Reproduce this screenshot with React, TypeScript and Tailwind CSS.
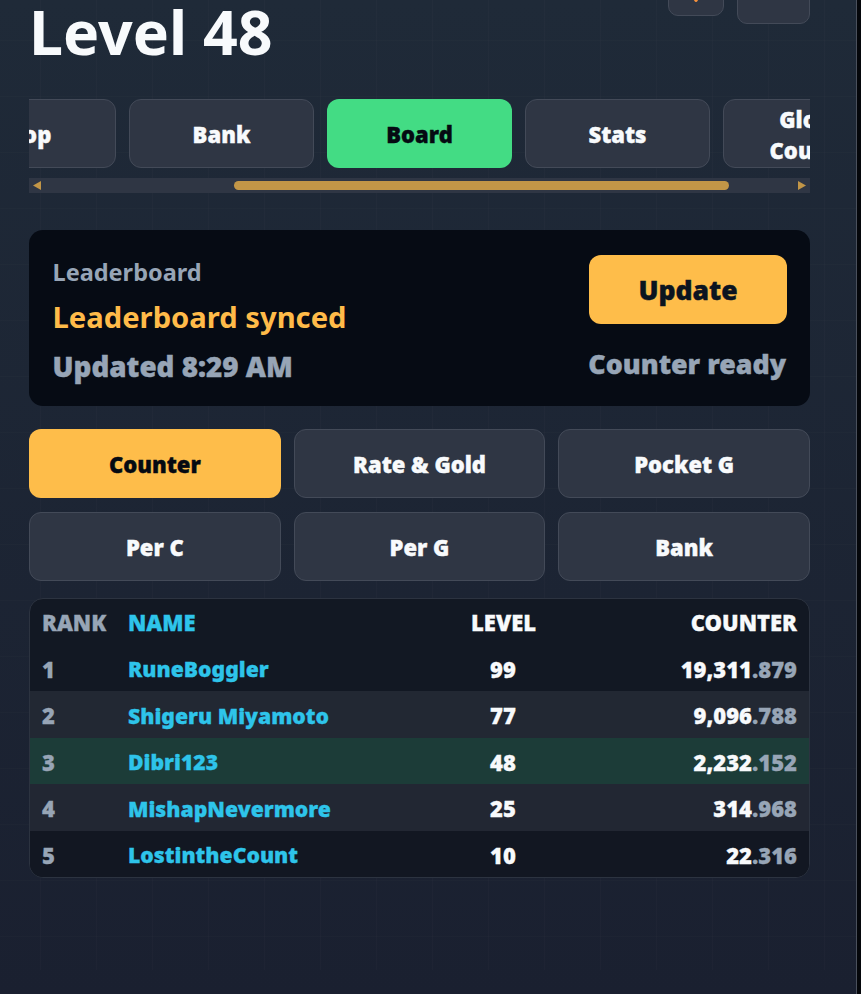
const font = { fontFamily: '"Noto Sans", sans-serif' };

const tabs = ['Shop', 'Bank', 'Board', 'Stats', 'Global Counter'];
const sorts = ['Counter', 'Rate & Gold', 'Pocket G', 'Per C', 'Per G', 'Bank'];
const rows = [
  { rank: 1, name: 'RuneBoggler', level: 99, whole: '19,311', frac: '.879', bg: 'bg-[#121823]' },
  { rank: 2, name: 'Shigeru Miyamoto', level: 77, whole: '9,096', frac: '.788', bg: 'bg-[#222833]' },
  { rank: 3, name: 'Dibri123', level: 48, whole: '2,232', frac: '.152', bg: 'bg-[#1c3c38]' },
  { rank: 4, name: 'MishapNevermore', level: 25, whole: '314', frac: '.968', bg: 'bg-[#222733]' },
  { rank: 5, name: 'LostintheCount', level: 10, whole: '22', frac: '.316', bg: 'bg-[#121722]' },
];

export default function App() {
  return (
    <div style={font} className="h-[994px] overflow-hidden bg-[#05070b] pr-[4px]">
      <div className="h-full overflow-hidden border-r border-[#4a505c] bg-gradient-to-b from-[#1f2a38] to-[#1a2030]">
        <div className="h-full bg-[linear-gradient(rgba(255,255,255,0.012)_1px,transparent_1px),linear-gradient(90deg,rgba(255,255,255,0.016)_1px,transparent_1px)] bg-[size:56px_56px] bg-[position:40px_8px]">
          <div className="ml-[29px] w-[781px] -mt-[24px]">
            <div className="flex items-start justify-between h-[123px]">
              <div className="pt-[15px] text-[60.8px] leading-[82px] font-bold text-[#f8fafc]">Level 48</div>
              <div className="flex gap-[13px]">
                <div className="w-[56px] h-[40px] rounded-[10px] border border-[#434a58] bg-[#2f3644] flex items-center justify-center">
                  <svg width="6" height="11" viewBox="0 0 6 11"><ellipse cx="3" cy="5.5" rx="2.5" ry="5.5" fill="#f6913c" /></svg>
                </div>
                <div className="w-[73px] h-[48px] rounded-[10px] border border-[#434a58] bg-[#2f3644]" />
              </div>
            </div>

            <div className="flex gap-[13px] overflow-hidden">
              {tabs.map((t, i) => (
                <div
                  key={t}
                  className={`shrink-0 w-[185px] h-[69px] rounded-[12px] px-[24px] pt-[2px] flex items-center justify-center text-center text-[22px] leading-[31px] font-black [-webkit-text-stroke:0.4px_currentColor] ${i === 0 ? '-ml-[98px]' : ''} ${t === 'Board' ? 'bg-[#43dc84] text-[#050a12]' : 'border border-[#434a58] bg-[#2f3644] text-[#f8fafc]'}`}
                >
                  {t}
                </div>
              ))}
            </div>
            <div className="mt-[10px] h-[15px] bg-[#2f3644] flex items-center justify-between px-[4px]">
              <svg width="8" height="9" viewBox="0 0 8 9"><path d="M0 4.5 8 0v9z" fill="#c29647" /></svg>
              <div className="w-[495px] h-[9px] rounded-full bg-[#c29647] ml-[193px] mr-[69px]" />
              <svg width="8" height="9" viewBox="0 0 8 9"><path d="M8 4.5 0 0v9z" fill="#c29647" /></svg>
            </div>

            <div className="mt-[37px] h-[176px] rounded-[14px] bg-[#060b14] pl-[23.5px] pr-[23px] flex justify-between">
              <div className="pt-[23.5px]">
                <div className="text-[23.5px] leading-[36px] font-bold text-[#97a5b6]">Leaderboard</div>
                <div className="text-[29.2px] leading-[48px] font-bold text-[#ffbb49] mt-[3px]">Leaderboard synced</div>
                <div className="text-[27.8px] leading-[50px] font-black text-[#97a5b6] [-webkit-text-stroke:0.4px_currentColor]">Updated 8:29 AM</div>
              </div>
              <div className="pt-[25px] flex flex-col items-end">
                <div className="w-[198px] h-[69px] pt-[3px] rounded-[12px] bg-[#febd4a] flex items-center justify-center text-[26.5px] font-black text-[#0b1420] [-webkit-text-stroke:0.4px_currentColor]">Update</div>
                <div className="mt-[15px] mr-[1px] text-[26.8px] leading-[50px] font-black text-[#97a5b6] [-webkit-text-stroke:0.4px_currentColor]">Counter ready</div>
              </div>
            </div>

            <div className="mt-[23px] grid grid-cols-3 gap-x-[13px] gap-y-[14px]">
              {sorts.map((s) => (
                <div
                  key={s}
                  className={`h-[69px] pt-[1.5px] rounded-[12px] flex items-center justify-center text-[22px] font-black [-webkit-text-stroke:0.4px_currentColor] ${s === 'Counter' ? 'bg-[#febd4a] text-[#050a12]' : 'border border-[#434a58] bg-[#2f3644] text-[#f8fafc]'}`}
                >
                  {s}
                </div>
              ))}
            </div>

            <div className="mt-[16.5px] rounded-[14px] border border-[#2c3340] bg-[#121823] overflow-hidden">
              <div className="flex h-[46px] pt-[2px] items-center px-[12px] text-[22px] font-black [-webkit-text-stroke:0.3px_currentColor]">
                <div className="w-[86px] text-[#97a5b6]">RANK</div>
                <div className="flex-1 text-[#2ec4ea]">NAME</div>
                <div className="w-[64px] text-center text-[#f8fafc]">LEVEL</div>
                <div className="w-[262px] text-right text-[#f8fafc]">COUNTER</div>
              </div>
              {rows.map((r) => (
                <div key={r.rank} className={`flex h-[46.5px] pt-[2.5px] items-center px-[12px] text-[22px] font-black [-webkit-text-stroke:0.3px_currentColor] ${r.bg}`}>
                  <div className="w-[86px] text-[#97a5b6]">{r.rank}</div>
                  <div className="flex-1 text-[21.2px] text-[#2ec4ea]">{r.name}</div>
                  <div className="w-[64px] text-center text-[#f8fafc]">{r.level}</div>
                  <div className="w-[262px] text-right text-[#f8fafc]">
                    {r.whole}
                    <span className="text-[#97a5b6]">{r.frac}</span>
                  </div>
                </div>
              ))}
            </div>
          </div>
        </div>
      </div>
    </div>
  );
}
